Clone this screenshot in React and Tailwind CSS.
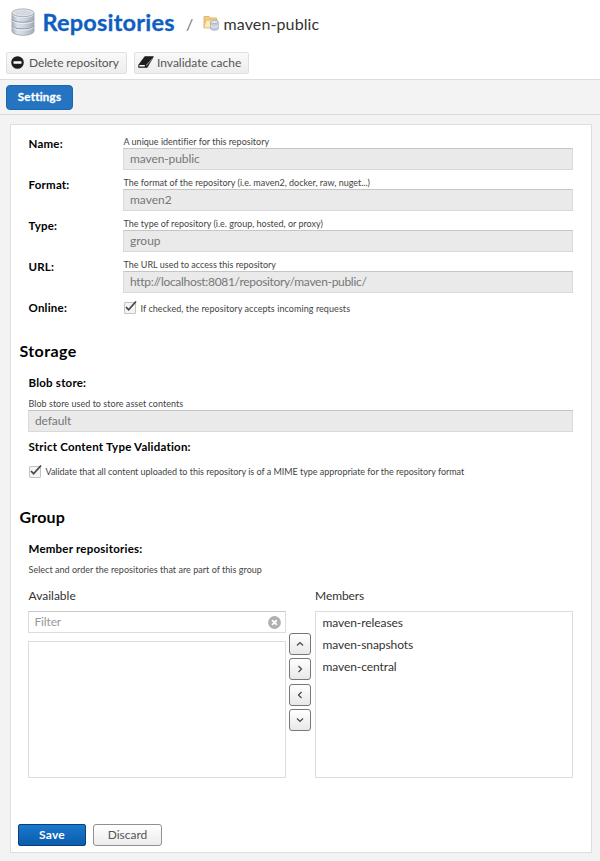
import React from "react";

function DatabaseIcon({ className }) {
  return (
    <svg viewBox="0 0 24 28" className={className}>
      <defs>
        <linearGradient id="dbBody" x1="0" x2="1">
          <stop offset="0" stopColor="#a9b1ba" />
          <stop offset="0.25" stopColor="#dbe1e8" />
          <stop offset="0.55" stopColor="#cdd5dd" />
          <stop offset="1" stopColor="#a3acb7" />
        </linearGradient>
      </defs>
      <path d="M1 5v18c0 2.500 5 4.300 11 4.300s11-1.800 11-4.300V5z" fill="url(#dbBody)" stroke="#9ba2aa" strokeWidth="0.800" />
      <g fill="none">
        <path d="M1 11.200c1 4 21 4 22 0M1 17.800c1 4 21 4 22 0" stroke="#909aa6" strokeWidth="1.100" />
        <path d="M1.500 12.600c1 3.800 20 3.800 21 0M1.500 19.200c1 3.800 20 3.800 21 0" stroke="#f1f4f7" strokeWidth="0.900" />
        <path d="M1.500 6.500c1 3.800 20 3.800 21 0" stroke="#f1f4f7" strokeWidth="0.900" />
      </g>
      <ellipse cx="12" cy="4.800" rx="11" ry="3.900" fill="#e3e7ec" stroke="#9da4ac" strokeWidth="0.800" />
      <ellipse cx="12" cy="4.800" rx="9" ry="2.600" fill="#d2d9e0" />
    </svg>
  );
}

function FolderDbIcon({ className }) {
  return (
    <svg viewBox="0 0 16 16" className={className}>
      <path d="M1 12V1.500h5l1 1.500h6.500v9z" fill="#f2cd80" stroke="#d8ac5e" strokeWidth="0.800" />
      <path d="M2.800 5h11.500l-1.800 8H0.800z" fill="#fce9b4" stroke="#e0b465" strokeWidth="0.800" />
      <path d="M7.500 7v6.500c0 2.300 7.800 2.300 7.800 0V7z" fill="#c3ced9" stroke="#98a5b3" strokeWidth="0.700" />
      <path d="M7.500 10.500c0 2 7.800 2 7.800 0" fill="none" stroke="#edf2f6" strokeWidth="0.800" />
      <ellipse cx="11.400" cy="7" rx="3.900" ry="1.500" fill="#e3e9ef" stroke="#98a5b3" strokeWidth="0.700" />
    </svg>
  );
}

function Checkbox() {
  return (
    <svg viewBox="0 0 14 14" className="h-[14px] w-[14px] shrink-0">
      <rect x="1.500" y="2.500" width="11" height="11" rx="0.500" fill="#f4f4f4" stroke="#c4c4c4" />
      <path d="M3 7L5.600 9.800L13 1.500" fill="none" stroke="#444" strokeWidth="1.700" />
    </svg>
  );
}

function Hint({ children, className = "" }) {
  return <div className={`whitespace-nowrap text-[9px] text-[#444] ${className}`}>{children}</div>;
}

function ReadOnly({ children, className = "" }) {
  return (
    <div className={`h-[22px] border border-t-[#c5c5c5] border-x-[#d9d9d9] border-b-[#d9d9d9] bg-[#eaeaea] pl-[6px] text-[12px] leading-[19px] text-[#777] ${className}`}>
      {children}
    </div>
  );
}

function Label({ children, className = "" }) {
  return <div className={`whitespace-nowrap pl-[0.500px] text-[11.500px] font-bold tracking-[0.220px] text-black ${className}`}>{children}</div>;
}

const FIELDS = [
  { label: "Name:", hint: "A unique identifier for this repository", value: "maven-public", tracking: "tracking-[-0.100px]" },
  { label: "Format:", hint: "The format of the repository (i.e. maven2, docker, raw, nuget...)", value: "maven2", tracking: "tracking-normal" },
  { label: "Type:", hint: "The type of repository (i.e. group, hosted, or proxy)", value: "group", tracking: "tracking-normal" },
  { label: "URL:", hint: "The URL used to access this repository", value: "http://localhost:8081/repository/maven-public/", tracking: "tracking-[-0.310px]" },
];

const ARROWS = ["M2 6.500L5 3.500L8 6.500", "M3.500 2L6.500 5L3.500 8", "M6.500 2L3.500 5L6.500 8", "M2 3.500L5 6.500L8 3.500"];

export default function App() {
  return (
    <div className="flex h-[861px] w-[600px] flex-col overflow-hidden bg-[#f3f3f3] font-['Lato',sans-serif] text-[#333] [font-variant-ligatures:none]">
      <header className="h-[79px] bg-white">
        <div className="flex h-[46px] items-center pl-[11px]">
          <DatabaseIcon className="mt-[-2px] h-[28px] w-[24px]" />
          <h1 className="ml-[7.500px] mt-[-3px] w-[132.500px] whitespace-nowrap text-[23.500px] font-bold leading-[46px] tracking-[0.200px] text-[#0f5fc0] [-webkit-text-stroke:0.300px_#0f5fc0]">Repositories</h1>
          <span className="ml-[11px] mt-[1px] w-[17px] text-[16px] text-[#777]">/</span>
          <FolderDbIcon className="h-[16px] w-[16px]" />
          <span className="ml-[4.500px] mt-[2px] whitespace-nowrap text-[16px] tracking-[0.120px] text-[#333]">maven-public</span>
        </div>
        <div className="flex gap-[7px] pl-[6px] pt-[6px] text-[12px] text-[#555]">
          <div className="flex h-[22px] w-[121px] items-center rounded-[2px] border border-[#e0e0e0] bg-gradient-to-b from-[#f9f9f9] to-[#ededed] pl-[4px]">
            <svg viewBox="0 0 12 12" className="mt-[-2px] h-[13px] w-[13px]">
              <circle cx="6" cy="6" r="5.800" fill="#1e1e1e" />
              <rect x="2.300" y="4.800" width="7.400" height="2.400" rx="0.500" fill="#fff" />
            </svg>
            <span className="ml-[5px] whitespace-nowrap tracking-[-0.120px]">Delete repository</span>
          </div>
          <div className="flex h-[22px] w-[115px] items-center rounded-[2px] border border-[#e0e0e0] bg-gradient-to-b from-[#f9f9f9] to-[#ededed] pl-[3px]">
            <svg viewBox="0 0 16 12" className="mt-[-2px] h-[12px] w-[16px]">
              <path d="M6.800 0.600H15.500L9.200 11.400H0.500L0.700 8.800z" fill="#1e1e1e" stroke="#1e1e1e" strokeWidth="0.600" strokeLinejoin="round" />
              <path d="M1.500 9H7L6.600 10.600H1.200z" fill="#fff" />
              <path d="M8 8.800L14.300 2.200L14.100 3.600L8.300 10.300z" fill="#8a8a8a" />
            </svg>
            <span className="ml-[3px] whitespace-nowrap">Invalidate cache</span>
          </div>
        </div>
      </header>

      <nav className="h-[36px] border-y border-[#dcdcdc] pl-[6px] pt-[5px]">
        <div className="flex h-[25px] w-[67px] items-center justify-center rounded-[4px] border border-[#1b66ad] bg-[#2474c2] pb-[2px] text-[11.500px] font-bold tracking-[0.250px] text-white [-webkit-text-stroke:0.300px_white]">Settings</div>
      </nav>

      <main className="ml-[10px] mt-[9px] h-[729px] w-[582px] border border-[#dedede] bg-white pt-[11px]">
        <section className="ml-[17px] w-[545px]">
          {FIELDS.map((f) => (
            <div key={f.label} className="flex h-[41px]">
              <Label className="w-[95px] pt-[2px] leading-[12px]">{f.label}</Label>
              <div className="w-[450px]">
                <Hint className="h-[12px] pl-[0.500px] leading-[11px]">{f.hint}</Hint>
                <ReadOnly className={f.tracking}>{f.value}</ReadOnly>
              </div>
            </div>
          ))}
          <div className="flex h-[16px]">
            <Label className="w-[95px] pt-[2px] leading-[12px]">Online:</Label>
            <Checkbox />
            <Hint className="ml-[3.500px] pt-[3px] leading-[11px] tracking-[0.070px]">If checked, the repository accepts incoming requests</Hint>
          </div>
        </section>

        <h2 className="ml-[8.500px] mt-[25px] h-[21px] text-[16px] font-bold leading-[20px] tracking-[0.400px] text-black">Storage</h2>
        <section className="ml-[17px] w-[545px]">
          <Label className="mt-[14px] h-[14px] leading-[14px]">Blob store:</Label>
          <Hint className="mt-[8px] h-[12px] pl-[0.500px] leading-[12px] tracking-[0.030px]">Blob store used to store asset contents</Hint>
          <ReadOnly className="tracking-[-0.100px]">default</ReadOnly>
          <Label className="mt-[8px] h-[14px] leading-[14px]">Strict Content Type Validation:</Label>
          <div className="mt-[10px] flex h-[14px]">
            <Checkbox />
            <Hint className="ml-[3.500px] pt-[1px] leading-[13px] tracking-[-0.030px]">Validate that all content uploaded to this repository is of a MIME type appropriate for the repository format</Hint>
          </div>
        </section>

        <h2 className="ml-[8.500px] mt-[29px] h-[21px] text-[16px] font-bold leading-[20px] tracking-[0.200px] text-black">Group</h2>
        <section className="ml-[17px] w-[545px]">
          <Label className="mt-[14px] h-[14px] leading-[14px]">Member repositories:</Label>
          <Hint className="mt-[8px] h-[12px] pl-[0.500px] leading-[12px] tracking-[0.030px]">Select and order the repositories that are part of this group</Hint>
          <div className="mt-[13px] flex">
            <div className="w-[258px]">
              <div className="h-[22px] pl-[0.500px] text-[12px] leading-[14px]">Available</div>
              <div className="flex h-[22px] items-center justify-between border border-[#dcdcdc] border-t-[#c8c8c8] pl-[5.500px] pr-[4px] text-[12px] text-[#999]">
                <span className="tracking-[-0.150px]">Filter</span>
                <svg viewBox="0 0 12 12" className="h-[13px] w-[13px]">
                  <circle cx="6" cy="6" r="5.900" fill="#b0b0b0" />
                  <path d="M3.800 3.800L8.200 8.200M8.200 3.800L3.800 8.200" stroke="#fff" strokeWidth="1.800" />
                </svg>
              </div>
              <div className="mt-[8px] h-[137px] border border-[#dcdcdc]" />
            </div>
            <div className="flex w-[29px] flex-col items-center gap-[3.400px] pt-[44px]">
              {ARROWS.map((d) => (
                <div key={d} className="mr-[1px] flex h-[22px] w-[22px] items-center justify-center rounded-[3px] border border-[#777] bg-gradient-to-b from-white to-[#e8e8e8]">
                  <svg viewBox="0 0 10 10" className="h-[10px] w-[10px]">
                    <path d={d} fill="none" stroke="#444" strokeWidth="1.200" />
                  </svg>
                </div>
              ))}
            </div>
            <div className="w-[258px]">
              <div className="h-[22px] text-[12px] leading-[14px] tracking-[-0.080px]">Members</div>
              <div className="h-[167px] border border-[#dcdcdc] pl-[6.500px] text-[12px] leading-[22px] tracking-[-0.080px]">
                <div>maven-releases</div>
                <div>maven-snapshots</div>
                <div>maven-central</div>
              </div>
            </div>
          </div>
        </section>

        <div className="ml-[7px] mt-[46px] flex gap-[7px] text-[12px]">
          <div className="flex h-[22px] w-[68px] items-center justify-center rounded-[2px] border border-[#0b3f7c] bg-gradient-to-b from-[#1b79cb] to-[#0a5cae] font-bold tracking-[0.200px] text-white">Save</div>
          <div className="flex h-[22px] w-[69px] items-center justify-center rounded-[3px] border border-[#909090] bg-gradient-to-b from-white to-[#ececec] text-[#555]">Discard</div>
        </div>
      </main>
    </div>
  );
}
